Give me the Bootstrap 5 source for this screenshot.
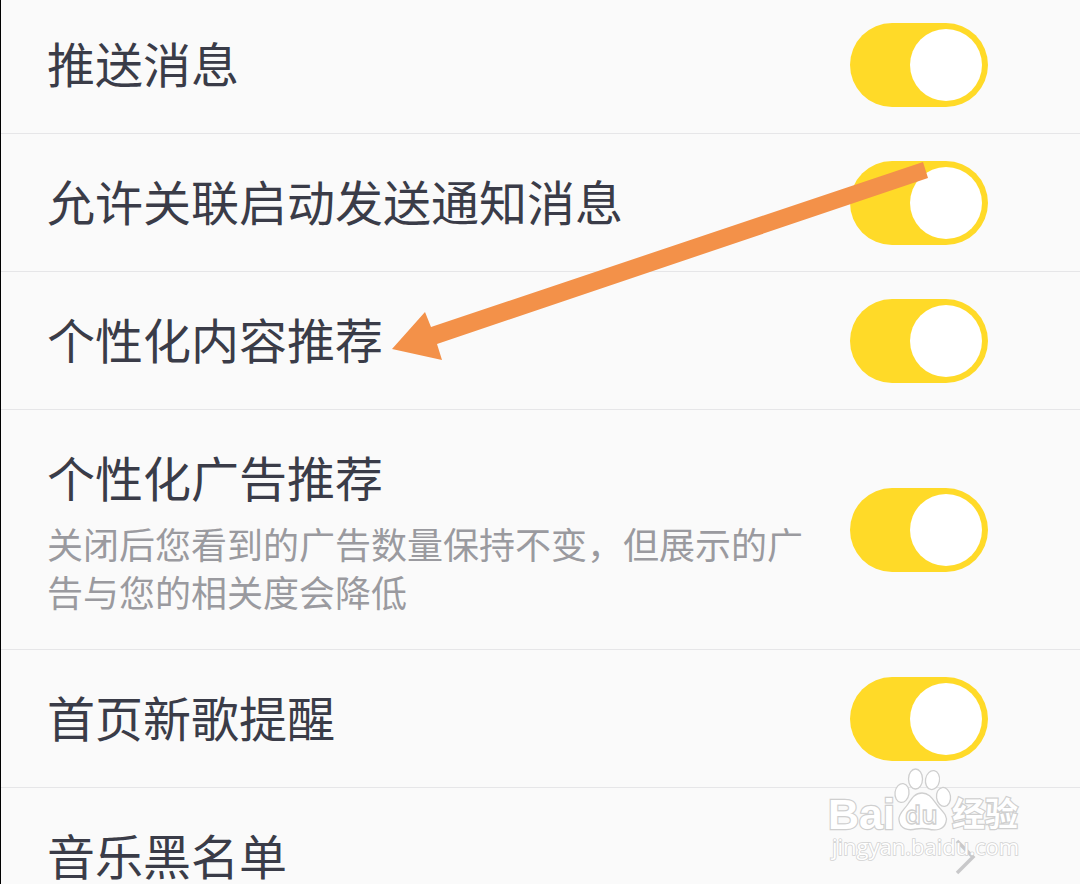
<!DOCTYPE html>
<html lang="zh-CN">
<head>
<meta charset="utf-8">
<meta name="viewport" content="width=device-width, initial-scale=1">
<title>消息设置</title>
<link href="https://cdn.jsdelivr.net/npm/bootstrap@5.3.0/dist/css/bootstrap.min.css" rel="stylesheet">
<style>
  body { background: #fafafa; color: #3a3c48; font-family: "Noto Sans CJK SC", sans-serif; }
  .screen { border-left: 1px solid #000; }
  .settings { margin-top: -4px; }
  .setting { min-height: 138px; padding: 0 92px 0 46px; background: transparent; color: inherit; border-color: #e6e6e8; border-width: 0 0 1px; }
  .setting-tall { min-height: 240px; }
  .setting-more { padding-right: 104px; }
  .setting-title { font-size: 48px; line-height: 72px; padding-bottom: 6px; }
  .setting-note { font-size: 36px; line-height: 48px; color: #9a9a9f; margin: 1px 0 5px; }
  .setting .toggle { width: 138px; height: 84px; margin: 0; float: none; border: 0; border-radius: 42px; background: #ffda28; position: relative; }
  .setting .toggle::before { content: ""; position: absolute; top: 6px; right: 6px; width: 72px; height: 72px; border-radius: 50%; background: #fff; }
  .setting .toggle:not(:checked) { background: #ddd; }
  .setting .toggle:not(:checked)::before { right: auto; left: 6px; }
  .pointer { left: 390px; top: 160px; }
  .watermark { right: 52px; bottom: 20px; }
</style>
</head>
<body>
<main class="screen position-relative vh-100 overflow-hidden">
  <div class="settings list-group list-group-flush">
    <div class="setting list-group-item d-flex align-items-center justify-content-between">
      <label class="setting-title" for="push">推送消息</label>
      <div class="form-switch p-0 m-0 d-flex"><input class="form-check-input toggle" type="checkbox" role="switch" id="push" checked></div>
    </div>
    <div class="setting list-group-item d-flex align-items-center justify-content-between">
      <label class="setting-title" for="linked">允许关联启动发送通知消息</label>
      <div class="form-switch p-0 m-0 d-flex"><input class="form-check-input toggle" type="checkbox" role="switch" id="linked" checked></div>
    </div>
    <div class="setting list-group-item d-flex align-items-center justify-content-between">
      <label class="setting-title" for="content">个性化内容推荐</label>
      <div class="form-switch p-0 m-0 d-flex"><input class="form-check-input toggle" type="checkbox" role="switch" id="content" checked></div>
    </div>
    <div class="setting setting-tall list-group-item d-flex align-items-center justify-content-between gap-4">
      <div>
        <label class="setting-title d-block" for="ads">个性化广告推荐</label>
        <p class="setting-note" id="ads-note">关闭后您看到的广告数量保持不变，但展示的广告与您的相关度会降低</p>
      </div>
      <div class="form-switch p-0 m-0 d-flex"><input class="form-check-input toggle" type="checkbox" role="switch" id="ads" aria-describedby="ads-note" checked></div>
    </div>
    <div class="setting list-group-item d-flex align-items-center justify-content-between">
      <label class="setting-title" for="songs">首页新歌提醒</label>
      <div class="form-switch p-0 m-0 d-flex"><input class="form-check-input toggle" type="checkbox" role="switch" id="songs" checked></div>
    </div>
    <a href="#blacklist" class="setting setting-more list-group-item d-flex align-items-center justify-content-between">
      <span class="setting-title">音乐黑名单</span>
      <svg width="22" height="36" viewBox="0 0 22 36" fill="none" stroke="#c8c8ca" stroke-width="3.5" aria-hidden="true"><path d="M3 2 19 18 3 34"/></svg>
    </a>
  </div>

  <svg class="pointer position-absolute pe-none" width="540" height="202" viewBox="391 160 540 202" aria-hidden="true">
    <path fill="#f39149" d="M392 349 425 312 431 327 923 162 928 178 437 344 442 360Z"/>
  </svg>

  <svg class="watermark position-absolute pe-none" width="200" height="98" viewBox="828 766 200 98" role="img" aria-label="Baidu经验">
    <g fill="#fff" stroke="#cfcfcf" stroke-width="1.3">
      <g paint-order="stroke" stroke-width="2.4" font-weight="700">
        <text x="828" y="829" font-family="Liberation Sans, sans-serif" font-size="43">Bai</text>
        <text x="952" y="826" font-family="Noto Sans CJK SC, sans-serif" font-size="33">经验</text>
      </g>
      <ellipse cx="902" cy="793" rx="7" ry="9.5" transform="rotate(8 902 793)"/>
      <ellipse cx="915.5" cy="779" rx="7" ry="10"/>
      <ellipse cx="932.5" cy="780" rx="7" ry="9.5" transform="rotate(10 932 780)"/>
      <ellipse cx="943.5" cy="797" rx="7" ry="9.5" transform="rotate(-8 943 797)"/>
      <path d="M922 793C930 793 933 800 938 806C943 812 948 816 946 822C944 830 936 831 928 829Q922 828 916 829C908 831 900 829 899 820C898 814 904 810 908 804C912 798 915 793 922 793Z"/>
      <text x="905" y="824" font-family="Open Sans, sans-serif" font-size="26" font-weight="600">du</text>
      <text x="832" y="855" font-family="Open Sans, sans-serif" font-size="22" stroke="#d2d2d2" stroke-width="1.6" paint-order="stroke">jingyan.baidu.com</text>
    </g>
  </svg>
</main>
<script src="https://cdn.jsdelivr.net/npm/bootstrap@5.3.0/dist/js/bootstrap.bundle.min.js"></script>
</body>
</html>
